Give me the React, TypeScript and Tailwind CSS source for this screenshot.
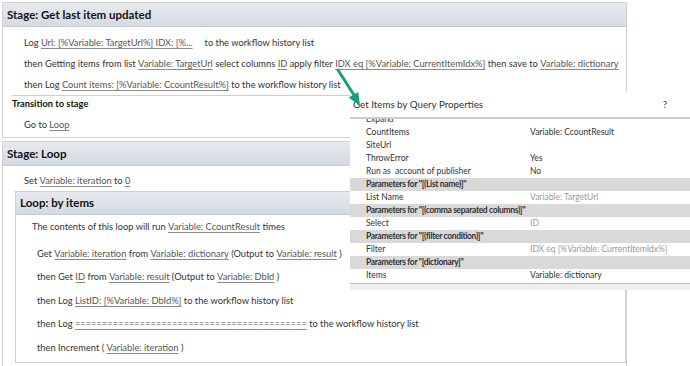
import React from 'react';

const L = ({ children }: { children: React.ReactNode }) => (
  <span className="underline decoration-[#8c8c8c] underline-offset-[2px] text-[#555]">{children}</span>
);

const StageHeader = ({ title }: { title: string }) => (
  <div className="h-[24px] flex items-center pl-[4px] bg-gradient-to-b from-[#e7eaee] to-[#d5dae2] border-b border-[#c8cdd5] text-[11.5px] font-bold text-[#111]">
    {title}
  </div>
);

const Row = ({ label, value, muted }: { label: string; value?: string; muted?: boolean }) => (
  <div className="h-[13px] flex items-center whitespace-pre">
    <div className="w-[180px] pl-[16px]">{label}</div>
    <div className={muted ? 'text-[#9a9a9a]' : ''}>{value}</div>
  </div>
);

const Section = ({ title }: { title: string }) => (
  <div className="h-[13px] flex items-center pl-[16px] bg-[#d9d9d9] font-bold text-[8.5px] tracking-[-0.35px]">{title}</div>
);

export default function App() {
  return (
    <div className="relative w-[690px] h-[366px] overflow-hidden bg-white text-[#333] text-[9.3px] font-[family-name:Lato,sans-serif]">
      {/* stages */}
      <div className="w-[625px] ml-[2px] pt-[2px] flex flex-col gap-[3px]">
        <div className="border border-[#d2d2d2]">
          <StageHeader title="Stage: Get last item updated" />
          <div className="pt-[5px] pb-[2px]">
            <div className="h-[21px] flex items-center pl-[21px] whitespace-pre">
              Log <L>Url: [%Variable: TargetUrl%] IDX: [%...</L>
              <span className="ml-[12px]">to the workflow history list</span>
            </div>
            <div className="h-[21px] flex items-center pl-[21px] whitespace-pre">
              then Getting items from list <L>Variable: TargetUrl</L> select columns <L>ID</L> apply filter{' '}
              <L>IDX eq [%Variable: CurrentItemIdx%]</L> then save to <L>Variable: dictionary</L>
            </div>
            <div className="h-[21px] flex items-center pl-[21px] whitespace-pre">
              then Log <L>Count items: [%Variable: CcountResult%]</L> to the workflow history list
            </div>
            <div className="ml-[9px] border-t border-[#cfcfcf]" />
            <div className="h-[16px] flex items-center pl-[9px] font-bold text-[#111]">Transition to stage</div>
            <div className="h-[21px] mt-[2px] flex items-center pl-[21px] whitespace-pre">
              Go to <L>Loop</L>
            </div>
          </div>
        </div>

        <div className="border border-[#d2d2d2] h-[260px]">
          <StageHeader title="Stage: Loop" />
          <div className="h-[20px] mt-[5px] flex items-center pl-[21px] whitespace-pre">
            Set <L>Variable: iteration</L> to <L>0</L>
          </div>
          <div className="ml-[12px] border border-[#cfcfcf] pb-[2px]">
            <div className="h-[23px] flex items-center pl-[4px] bg-gradient-to-b from-[#e7eaee] to-[#d5dae2] border-b border-[#c8cdd5] text-[11.5px] font-bold text-[#111]">
              Loop: by items
            </div>
            <div className="h-[20px] mt-[2px] flex items-center pl-[16px] whitespace-pre">
              The contents of this loop will run <L>Variable: CcountResult</L> times
            </div>
            <div className="mt-[5px] flex flex-col pl-[21px] whitespace-pre">
              <div className="h-[23.5px] flex items-center">
                Get <L>Variable: iteration</L> from <L>Variable: dictionary</L> (Output to <L>Variable: result</L> )
              </div>
              <div className="h-[23.5px] flex items-center">
                then Get <L>ID</L> from <L>Variable: result</L> (Output to <L>Variable: DbId</L> )
              </div>
              <div className="h-[23.5px] flex items-center">
                then Log <L>ListID: [%Variable: DbId%]</L> to the workflow history list
              </div>
              <div className="h-[23.5px] flex items-center">
                then Log <L>===========================================</L> to the workflow history list
              </div>
              <div className="h-[23.5px] flex items-center">
                then Increment ( <L>Variable: iteration</L> )
              </div>
            </div>
          </div>
        </div>
      </div>

      {/* properties dialog */}
      <div className="absolute left-[350px] top-[92px] w-[340px] bg-white text-[8.5px]">
        <div className="h-[25px] flex items-center justify-between pl-[3px] pr-[23px] text-[9.75px]">
          <span>Get Items by Query Properties</span>
          <span>?</span>
        </div>
        <div className="border-t-2 border-[#cdcdcd]" />
        <div className="h-[164px] overflow-hidden">
          <div className="-mt-[6px]">
            <Row label="Expand" />
            <Row label="CountItems" value="Variable: CcountResult" />
            <Row label="SiteUrl" />
            <Row label="ThrowError" value="Yes" />
            <Row label="Run as  account of publisher" value="No" />
            <Section title={'Parameters for "[(List name)]"'} />
            <Row label="List Name" value="Variable: TargetUrl" muted />
            <Section title={'Parameters for "[(comma separated columns)]"'} />
            <Row label="Select" value="ID" muted />
            <Section title={'Parameters for "[(filter condition)]"'} />
            <Row label="Filter" value="IDX eq [%Variable: CurrentItemIdx%]" muted />
            <Section title={'Parameters for "[dictionary]"'} />
            <Row label="Items" value="Variable: dictionary" />
          </div>
        </div>
        <div className="border-t border-[#bdbdbd] h-[7px] bg-[#efefef]" />
      </div>

      {/* callout arrow */}
      <svg className="absolute left-[330px] top-[60px]" width="40" height="55" viewBox="0 0 40 55">
        <line x1="8" y1="10" x2="24" y2="35" stroke="#17a07a" strokeWidth="3" strokeLinecap="round" />
        <polygon points="30,46 18.7,37.5 28.3,31.9" fill="#17a07a" />
      </svg>
    </div>
  );
}
